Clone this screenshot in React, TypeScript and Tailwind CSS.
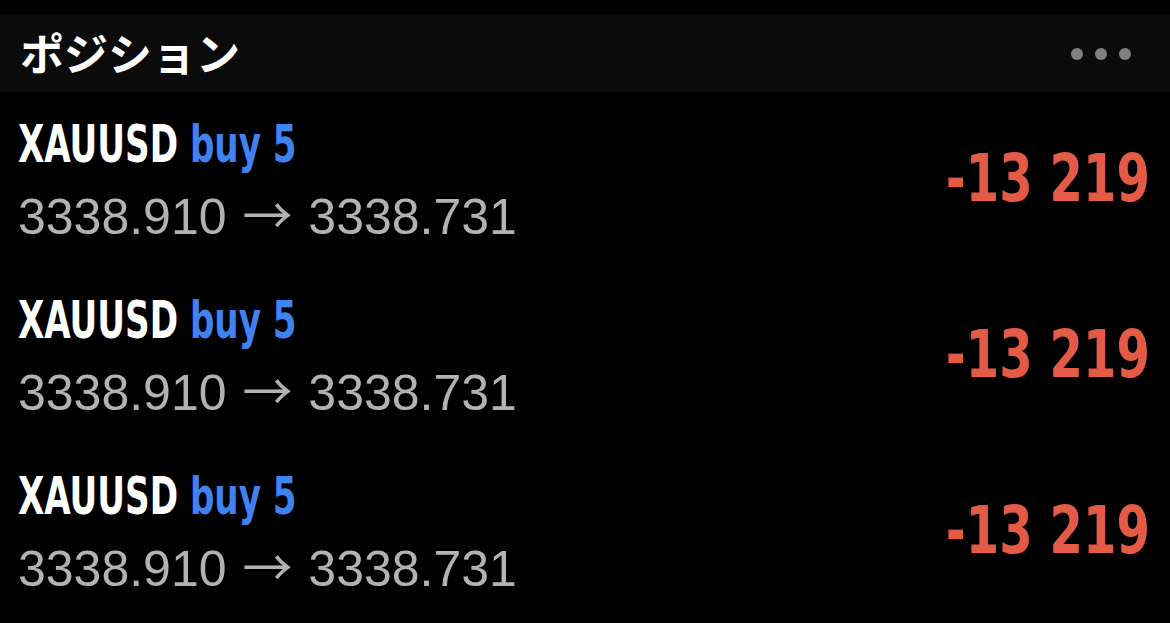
import React from 'react';

const POSITIONS = [
	{ symbol: 'XAUUSD', side: 'buy 5', open: '3338.910', current: '3338.731', profit: '-13 219' },
	{ symbol: 'XAUUSD', side: 'buy 5', open: '3338.910', current: '3338.731', profit: '-13 219' },
	{ symbol: 'XAUUSD', side: 'buy 5', open: '3338.910', current: '3338.731', profit: '-13 219' },
];

const condensed = "font-['DejaVu_Sans',sans-serif] font-stretch-condensed";

function PositionRow({ p }: { p: (typeof POSITIONS)[number] }) {
	return (
		<div className="flex h-[176px] items-center justify-between pl-[18px] pr-[20px]">
			<div className="flex flex-col">
				<div
					className={`${condensed} origin-left scale-x-[0.73] whitespace-nowrap text-[52px] font-bold leading-[56px] text-white`}
				>
					{p.symbol} <span className="text-[#3f83f2]">{p.side}</span>
				</div>
				<div className="mt-[12px] whitespace-nowrap font-['Liberation_Sans',sans-serif] text-[50px] leading-[56px] text-[#b2b2b2]">
					{p.open}{' '}
					<span className="mx-[2px] font-['Noto_Sans_CJK_JP',sans-serif] text-[50px]">→</span>{' '}
					{p.current}
				</div>
			</div>
			<div
				className={`${condensed} origin-right scale-x-[0.81] whitespace-nowrap pb-[4px] text-[66px] font-bold text-[#e35a47]`}
			>
				{p.profit}
			</div>
		</div>
	);
}

export default function App() {
	return (
		<div className="h-[623px] w-full overflow-hidden bg-black pt-[15px]">
			<div className="flex h-[77px] items-center justify-between bg-[#0b0b0b] pl-[20px] pr-[39px]">
				<span className="pb-[4px] font-['Noto_Sans_CJK_JP',sans-serif] text-[44px] font-bold leading-none text-white">
					ポジション
				</span>
				<div className="flex gap-[12px]">
					<span className="h-[12px] w-[12px] rounded-full bg-[#808080]" />
					<span className="h-[12px] w-[12px] rounded-full bg-[#808080]" />
					<span className="h-[12px] w-[12px] rounded-full bg-[#808080]" />
				</div>
			</div>
			{POSITIONS.map((p, i) => (
				<PositionRow key={i} p={p} />
			))}
		</div>
	);
}
